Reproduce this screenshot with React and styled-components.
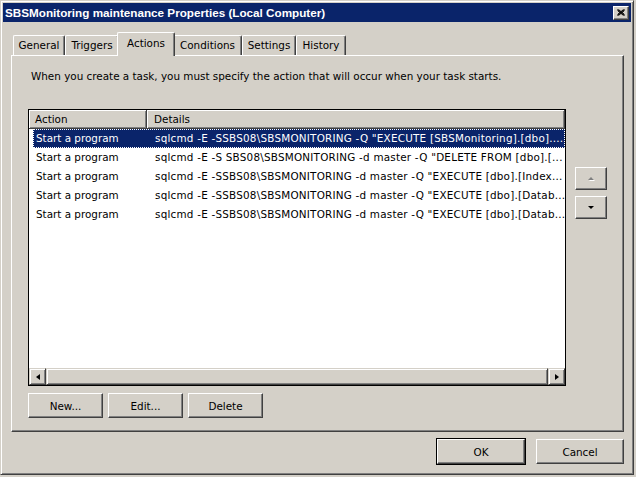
import React from 'react';
import styled, { createGlobalStyle } from 'styled-components';

const Global = createGlobalStyle`
  html, body { margin: 0; padding: 0; width: 636px; height: 477px; overflow: hidden; background: #d4d0c8; }
  body { font-family: "DejaVu Sans", "Liberation Sans", sans-serif; font-size: 10.4px; color: #000; }
  * { box-sizing: border-box; }
`;

const Desktop = styled.div`
  width: 636px;
  height: 477px;
  background: #d4d0c8;
  display: flex;
  align-items: flex-start;
`;

const Window = styled.div`
  width: 634px;
  height: 475px;
  background: #d4d0c8;
  border: 1px solid;
  border-color: #d4d0c8 #404040 #404040 #d4d0c8;
  box-shadow: inset 1px 1px #fff, inset -1px -1px #808080;
  padding: 2px;
  display: flex;
  flex-direction: column;
`;

const TitleBar = styled.div`
  height: 19px;
  background: #0a246a;
  color: #fff;
  display: flex;
  align-items: center;
  justify-content: space-between;
  padding: 0 2px 0 2px;
  font-family: "Liberation Sans", Arial, sans-serif;
  font-weight: bold;
  font-size: 11.7px;
`;

const CloseButton = styled.div`
  width: 16px;
  height: 14px;
  background: #d4d0c8;
  border: 1px solid;
  border-color: #fff #404040 #404040 #fff;
  box-shadow: inset -1px -1px #808080;
  display: flex;
  align-items: center;
  justify-content: center;
`;

const Body = styled.div`
  display: flex;
  flex-direction: column;
  padding: 10px 7px 0 8px;
`;

const TabStrip = styled.div`
  display: flex;
  align-items: flex-end;
  height: 23px;
  padding-left: 2px;
  position: relative;
  z-index: 1;
`;

const Tab = styled.div`
  width: ${p => p.$w + (p.$active ? 4 : 0)}px;
  height: ${p => (p.$active ? '24px' : '20px')};
  margin: ${p => (p.$active ? '0 -2px -1px -2px' : '0')};
  line-height: ${p => (p.$active ? '20px' : '18px')};
  text-align: center;
  background: #d4d0c8;
  border-top: 1px solid #fff;
  border-left: 1px solid #fff;
  border-right: 1px solid #404040;
  box-shadow: inset -1px 0 #808080;
  border-radius: 2px 2px 0 0;
  position: relative;
  z-index: ${p => (p.$active ? 2 : 1)};
  white-space: nowrap;
`;

const Panel = styled.div`
  width: 613px;
  height: 377px;
  border-top: 1px solid #fff;
  border-left: 1px solid #fff;
  border-right: 1px solid #404040;
  border-bottom: 1px solid #404040;
  box-shadow: inset -1px -1px #808080;
  padding: 14px 16px 0 16px;
  display: flex;
  flex-direction: column;
`;

const Description = styled.div`
  margin-left: 3px;
  height: 13px;
  line-height: 13px;
  white-space: nowrap;
`;

const ListArea = styled.div`
  display: flex;
  gap: 9px;
  margin-top: 26px;
  align-items: flex-start;
`;

const ListBox = styled.div`
  width: 538px;
  height: 277px;
  border: 1px solid #000;
  background: #fff;
  display: flex;
  flex-direction: column;
`;

const Header = styled.div`
  display: flex;
  height: 19px;
  flex: none;
`;

const HeaderCell = styled.div`
  width: ${p => (p.$width ? `${p.$width}px` : 'auto')};
  flex: ${p => (p.$width ? 'none' : '1')};
  background: #d4d0c8;
  border-right: 1px solid #404040;
  border-bottom: 1px solid #404040;
  box-shadow: inset 1px 1px #fff, inset -1px -1px #808080;
  padding-left: ${p => p.$pad}px;
  line-height: 18px;
  white-space: nowrap;
`;

const Rows = styled.div`
  flex: 1;
  display: flex;
  flex-direction: column;
  padding-left: 4px;
  overflow: hidden;
`;

const Row = styled.div`
  display: flex;
  height: 19px;
  line-height: 19px;
  background: ${p => (p.$selected ? '#0a246a' : 'transparent')};
  color: ${p => (p.$selected ? '#fff' : '#000')};
  outline: ${p => (p.$selected ? '1px dotted #fff' : 'none')};
  outline-offset: -1px;
  white-space: nowrap;
`;

const ActionCell = styled.div`
  width: 114px;
  flex: none;
  padding-left: 3px;
  overflow: hidden;
`;

const DetailsCell = styled.div`
  flex: 1;
  padding-left: 8px;
  letter-spacing: 0.22px;
  overflow: hidden;
`;

const HScroll = styled.div`
  height: 17px;
  flex: none;
  display: flex;
  background: #e9e7e3;
`;

const ScrollButton = styled.div`
  width: 17px;
  height: 17px;
  flex: none;
  background: #d4d0c8;
  border: 1px solid;
  border-color: #d4d0c8 #404040 #404040 #d4d0c8;
  box-shadow: inset 1px 1px #fff, inset -1px -1px #808080;
  display: flex;
  align-items: center;
  justify-content: center;
`;

const Thumb = styled.div`
  flex: 1;
  background: #d4d0c8;
  border: 1px solid;
  border-color: #d4d0c8 #404040 #404040 #d4d0c8;
  box-shadow: inset 1px 1px #fff, inset -1px -1px #808080;
`;

const Arrow = styled.div`
  width: 0;
  height: 0;
  border-style: solid;
  border-color: transparent;
  ${p => p.$dir === 'left' && `border-width: 3.5px 4px 3.5px 0; border-right-color: #000;`}
  ${p => p.$dir === 'right' && `border-width: 3.5px 0 3.5px 4px; border-left-color: #000;`}
  ${p => p.$dir === 'up' && `border-width: 0 3.5px 3px 3.5px; border-bottom-color: ${p.$disabled ? '#808080' : '#000'}; filter: ${p.$disabled ? 'drop-shadow(1px 1px 0 #fff)' : 'none'};`}
  ${p => p.$dir === 'down' && `border-width: 3px 3.5px 0 3.5px; border-top-color: #000;`}
`;

const SideButtons = styled.div`
  display: flex;
  flex-direction: column;
  gap: 6px;
  margin-top: 58px;
`;

const Button = styled.div`
  width: ${p => p.$w}px;
  height: ${p => p.$h || 24}px;
  background: #d4d0c8;
  border: 1px solid;
  border-color: #fff #404040 #404040 #fff;
  box-shadow: inset -1px -1px #808080;
  display: flex;
  align-items: center;
  justify-content: center;
  white-space: nowrap;
  ${p => p.$default && `
    outline: 1px solid #000;
    outline-offset: 0;
  `}
`;

const ButtonRow = styled.div`
  display: flex;
  gap: 5px;
  margin-top: 7px;
`;

const DialogButtons = styled.div`
  display: flex;
  justify-content: flex-end;
  gap: 11px;
  margin-top: 7px;
  width: 613px;
`;

const rows = [
  ['Start a program', 'sqlcmd -E -SSBS08\\SBSMONITORING -Q "EXECUTE [SBSMonitoring].[dbo]....'],
  ['Start a program', 'sqlcmd -E -S SBS08\\SBSMONITORING -d master -Q "DELETE FROM [dbo].[...'],
  ['Start a program', 'sqlcmd -E -SSBS08\\SBSMONITORING -d master -Q "EXECUTE [dbo].[Index...'],
  ['Start a program', 'sqlcmd -E -SSBS08\\SBSMONITORING -d master -Q "EXECUTE [dbo].[Datab...'],
  ['Start a program', 'sqlcmd -E -SSBS08\\SBSMONITORING -d master -Q "EXECUTE [dbo].[Datab...'],
];

const tabs = [
  ['General', 52],
  ['Triggers', 54],
  ['Actions', 54],
  ['Conditions', 69],
  ['Settings', 54],
  ['History', 50],
];

export default function App() {
  return (
    <Desktop>
      <Global />
      <Window>
        <TitleBar>
          <span>SBSMonitoring maintenance Properties (Local Computer)</span>
          <CloseButton>
            <svg width="8" height="7" viewBox="0 0 8 7">
              <path d="M0.5 0.5 L7.5 6.5 M1.5 0.5 L7.5 5.5 M0.5 1.5 L6.5 6.5 M7.5 0.5 L0.5 6.5 M6.5 0.5 L0.5 5.5 M7.5 1.5 L1.5 6.5" stroke="#000" strokeWidth="1" fill="none" />
            </svg>
          </CloseButton>
        </TitleBar>
        <Body>
          <TabStrip>
            {tabs.map(([t, w]) => (
              <Tab key={t} $w={w} $active={t === 'Actions'}>{t}</Tab>
            ))}
          </TabStrip>
          <Panel>
            <Description>When you create a task, you must specify the action that will occur when your task starts.</Description>
            <ListArea>
              <ListBox>
                <Header>
                  <HeaderCell $width={118} $pad={6}>Action</HeaderCell>
                  <HeaderCell $pad={7}>Details</HeaderCell>
                </Header>
                <Rows>
                  {rows.map((r, i) => (
                    <Row key={i} $selected={i === 0}>
                      <ActionCell>{r[0]}</ActionCell>
                      <DetailsCell>{r[1]}</DetailsCell>
                    </Row>
                  ))}
                </Rows>
                <HScroll>
                  <ScrollButton><Arrow $dir="left" /></ScrollButton>
                  <Thumb />
                  <ScrollButton><Arrow $dir="right" /></ScrollButton>
                </HScroll>
              </ListBox>
              <SideButtons>
                <Button $w={32} $h={23}><Arrow $dir="up" $disabled /></Button>
                <Button $w={32} $h={23}><Arrow $dir="down" /></Button>
              </SideButtons>
            </ListArea>
            <ButtonRow>
              <Button $w={75} $h={25}>New...</Button>
              <Button $w={75} $h={25}>Edit...</Button>
              <Button $w={75} $h={25}>Delete</Button>
            </ButtonRow>
          </Panel>
          <DialogButtons>
            <Button $w={88} $h={25} $default>OK</Button>
            <Button $w={88} $h={25}>Cancel</Button>
          </DialogButtons>
        </Body>
      </Window>
    </Desktop>
  );
}
